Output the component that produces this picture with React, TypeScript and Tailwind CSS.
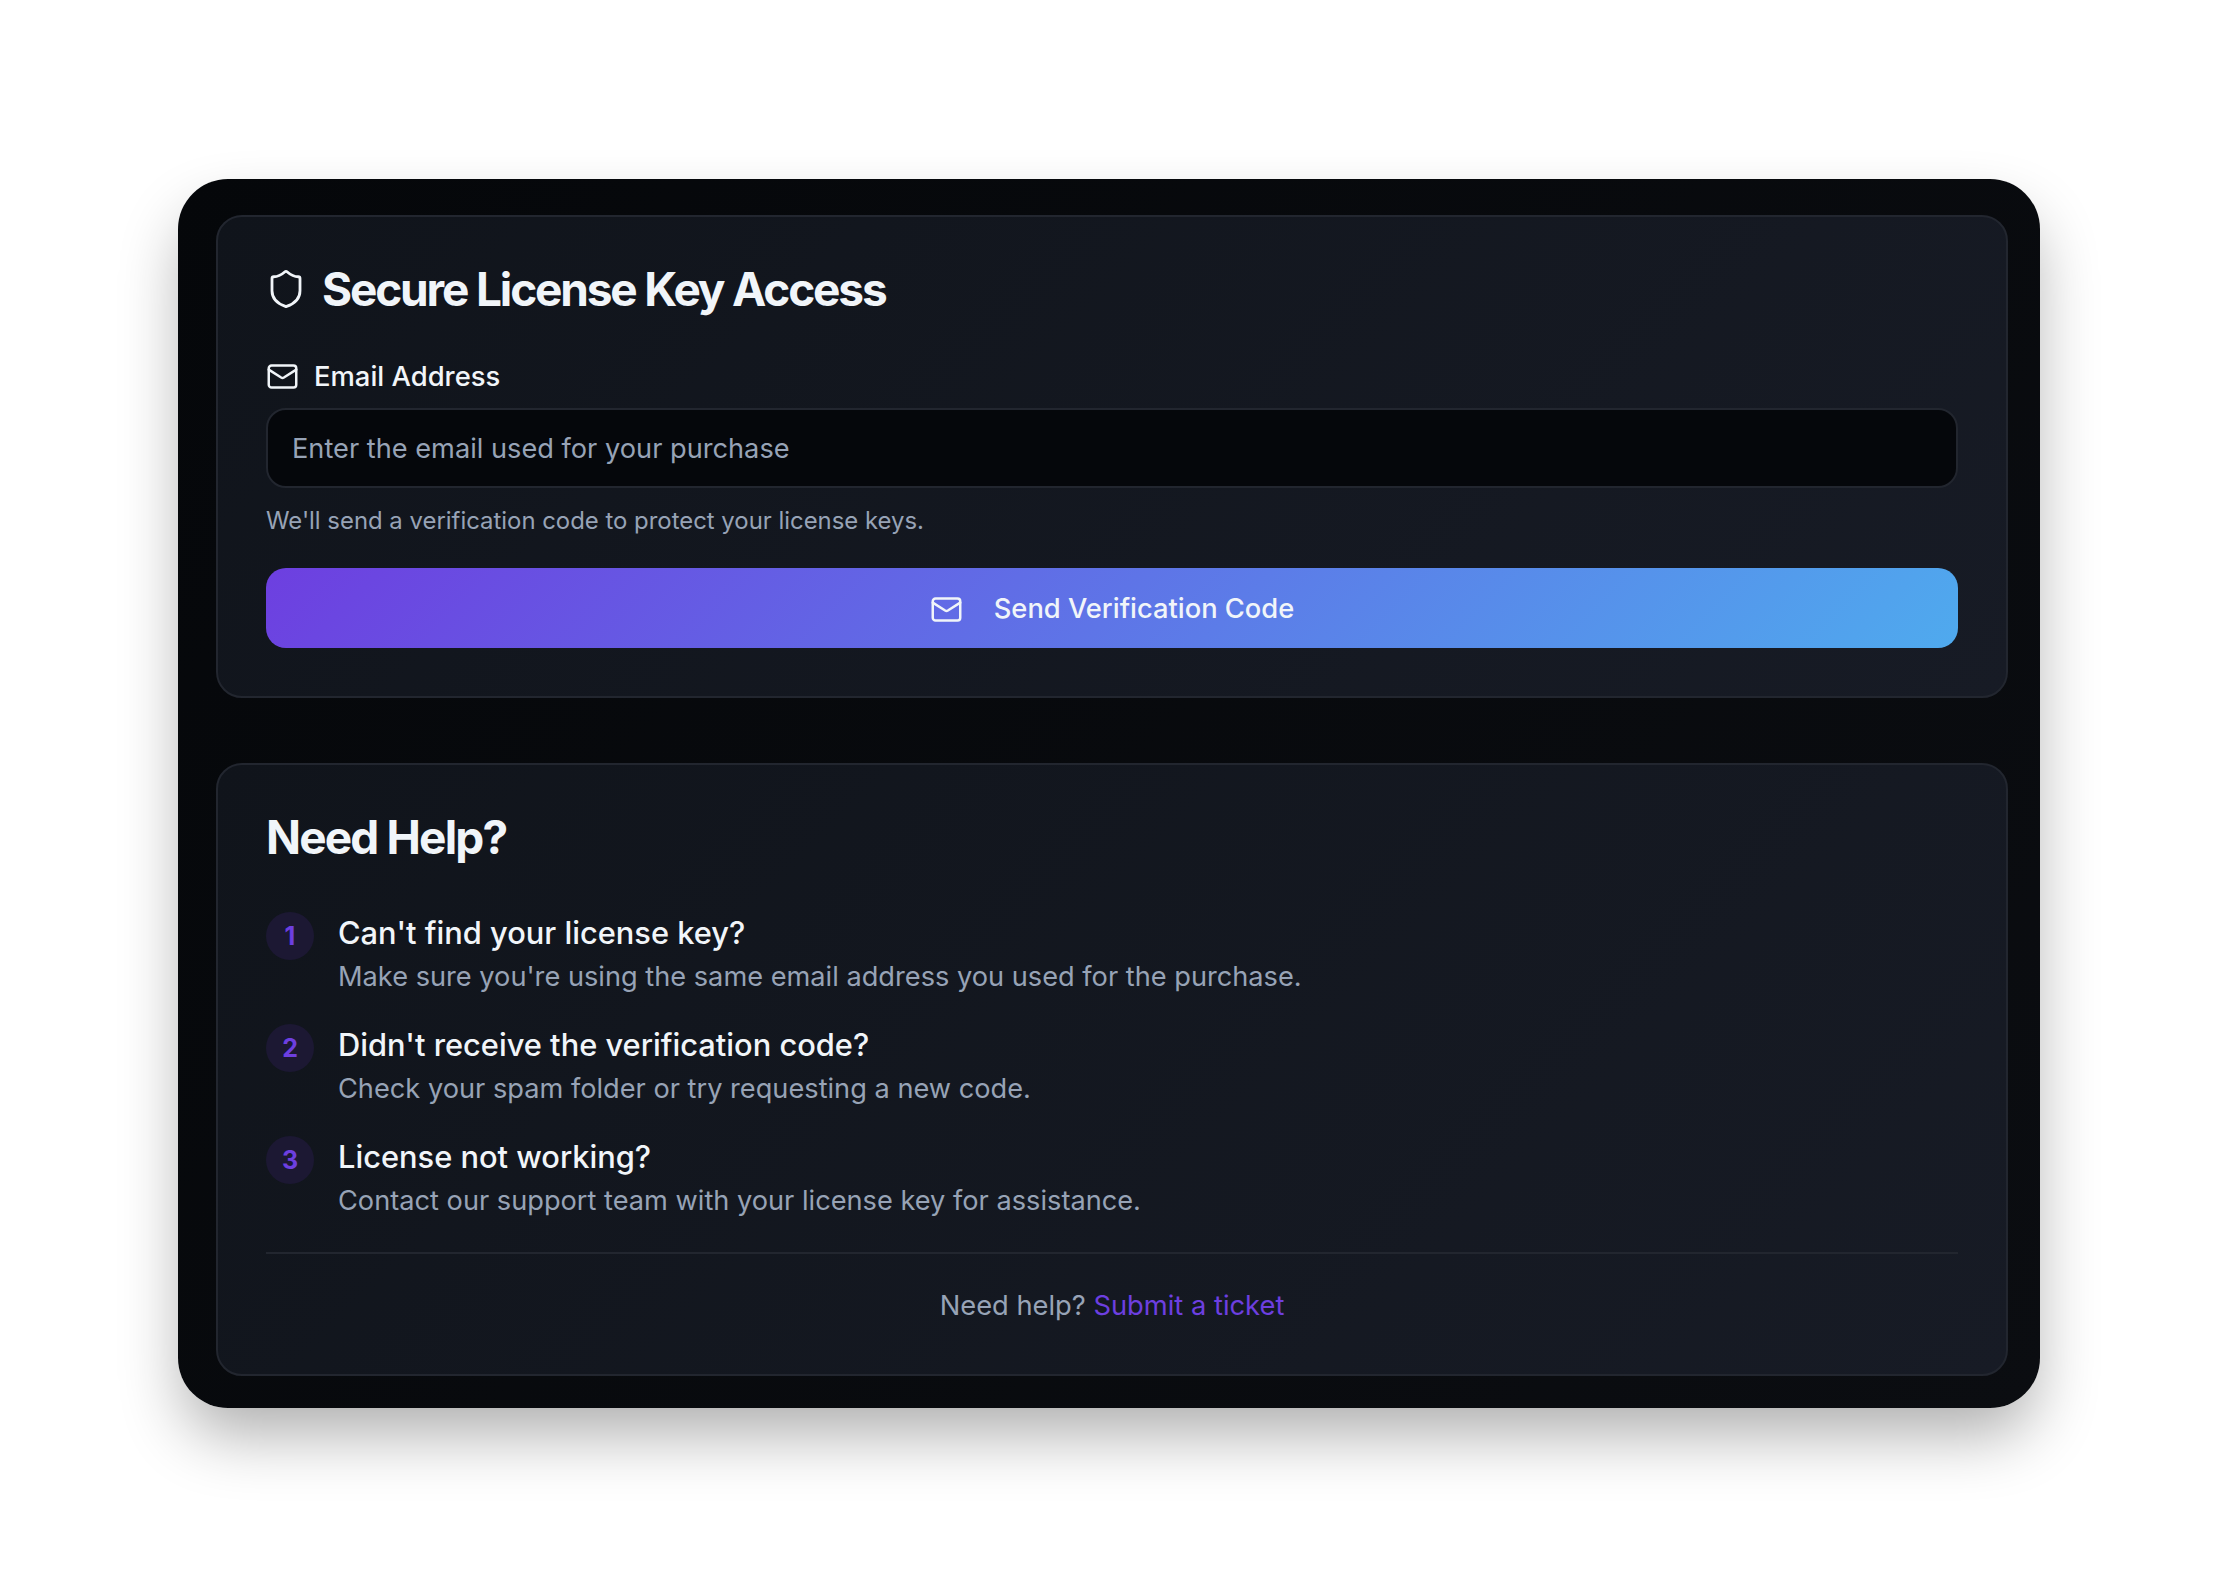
import React from 'react';
import { Mail, Shield } from 'lucide-react';

const helpItems = [
  {
    title: "Can't find your license key?",
    text: "Make sure you're using the same email address you used for the purchase.",
  },
  {
    title: "Didn't receive the verification code?",
    text: 'Check your spam folder or try requesting a new code.',
  },
  {
    title: 'License not working?',
    text: 'Contact our support team with your license key for assistance.',
  },
];

const panel =
  'rounded-[26px] border-2 border-[#22262f] bg-[linear-gradient(135deg,#10141b,#171b25)] pl-[48px] pr-[48px]';

export default function App() {
  return (
    <div className="flex min-h-screen items-center justify-center bg-white font-['Inter',sans-serif]">
      <div className="flex h-[1229px] w-[1862px] flex-col gap-[65px] rounded-[50px] bg-[linear-gradient(135deg,#05070a,#0b0d11)] pb-[32px] pl-[38px] pr-[32px] pt-[36px] shadow-[0_32px_64px_-6px_rgba(0,0,0,0.32)]">
        {/* License form */}
        <section className={`${panel} h-[483px] pt-[44px]`}>
          <div className="flex items-center gap-[15px]">
            <Shield size={42} strokeWidth={1.6} className="-ml-[1px] text-[#f1f5f9]" />
            <h1 className="text-[46px] font-bold leading-[56px] tracking-[-0.047em] text-[#f1f5f9]">
              Secure License Key Access
            </h1>
          </div>

          <label className="mt-[40px] flex h-[40px] items-center gap-[15px] text-[27.4px] font-medium text-[#f1f5f9]">
            <Mail size={33} strokeWidth={1.8} />
            Email Address
          </label>

          <div className="mt-[11px] flex h-[80px] items-center rounded-[20px] border-2 border-[#22262f] bg-[#05070b] px-[24px] pt-[4px] text-[27.2px] text-[#97a3b6]">
            Enter the email used for your purchase
          </div>

          <p className="mt-[16px] text-[23.9px] leading-[34px] text-[#97a3b6]">
            We'll send a verification code to protect your license keys.
          </p>

          <button className="mt-[30px] flex h-[80px] w-full items-center justify-center gap-[31px] rounded-[20px] bg-[linear-gradient(135deg,#6d3fe0,#4faaee)] pt-[3px] text-[27.3px] font-medium text-[#f1f5f9]">
            <Mail size={33} strokeWidth={1.8} />
            Send Verification Code
          </button>
        </section>

        {/* Help */}
        <section className={`${panel} flex-1 pt-[44px]`}>
          <h2 className="text-[46px] font-bold leading-[56px] tracking-[-0.04em] text-[#f1f5f9]">Need Help?</h2>

          <ul className="mt-[46px] flex flex-col gap-[24px]">
            {helpItems.map((item, i) => (
              <li key={item.title} className="flex gap-[24px]">
                <span className="mt-[1px] flex h-[48px] w-[48px] shrink-0 items-center justify-center rounded-full bg-[#1c1833] pt-[2px] text-[25px] font-bold text-[#6d3fe0]">
                  {i + 1}
                </span>
                <div>
                  <h3 className="text-[30.8px] font-medium leading-[44px] text-[#f1f5f9]">{item.title}</h3>
                  <p className="text-[27.2px] leading-[44px] text-[#97a3b6]">{item.text}</p>
                </div>
              </li>
            ))}
          </ul>

          <div className="mt-[29px] border-t-2 border-[#22262f] pt-[32px] text-center text-[27.3px] leading-[40px] text-[#97a3b6]">
            Need help? <a className="text-[#6d3fe0]">Submit a ticket</a>
          </div>
        </section>
      </div>
    </div>
  );
}
